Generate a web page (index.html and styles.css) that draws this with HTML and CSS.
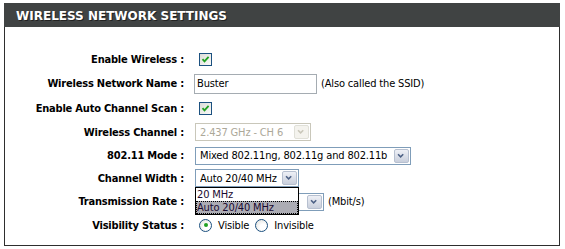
FILE: index.html
```html
<!DOCTYPE html>
<html>
<head>
<meta charset="utf-8">
<link rel="stylesheet" href="styles.css">
</head>
<body>
<div class="panel">
  <div class="panel-head">WIRELESS NETWORK SETTINGS</div>
  <div class="form">
    <div class="label">Enable Wireless :</div>
    <div class="field"><span class="check"><svg viewBox="0 0 13 13" width="13" height="13"><path d="M3.5 6.2 L5.5 8.4 L9.6 3.9" fill="none" stroke="#21a121" stroke-width="1.8"/></svg></span></div>

    <div class="label">Wireless Network Name :</div>
    <div class="field"><span class="text-input">Buster</span><span class="note">(Also called the SSID)</span></div>

    <div class="label">Enable Auto Channel Scan :</div>
    <div class="field"><span class="check"><svg viewBox="0 0 13 13" width="13" height="13"><path d="M3.5 6.2 L5.5 8.4 L9.6 3.9" fill="none" stroke="#21a121" stroke-width="1.8"/></svg></span></div>

    <div class="label">Wireless Channel :</div>
    <div class="field"><span class="select disabled w-channel"><span class="sel-text">2.437 GHz - CH 6</span><span class="arrow"><svg viewBox="0 0 15 14" width="13" height="14"><path d="M3.5 5 L6.5 8 L9.5 5" fill="none" stroke="#c9c7ba" stroke-width="1.8"/></svg></span></span></div>

    <div class="label">802.11 Mode :</div>
    <div class="field"><span class="select w-mode"><span class="sel-text">Mixed 802.11ng, 802.11g and 802.11b</span><span class="arrow"><svg viewBox="0 0 15 14" width="13" height="14"><path d="M3.5 5 L6.5 8 L9.5 5" fill="none" stroke="#4d6185" stroke-width="1.8"/></svg></span></span></div>

    <div class="label">Channel Width :</div>
    <div class="field"><span class="select w-width"><span class="sel-text">Auto 20/40 MHz</span><span class="arrow"><svg viewBox="0 0 15 14" width="13" height="14"><path d="M3.5 5 L6.5 8 L9.5 5" fill="none" stroke="#4d6185" stroke-width="1.8"/></svg></span>
      <span class="dropdown"><span class="opt">20 MHz</span><span class="opt active">Auto 20/40 MHz</span></span>
    </span></div>

    <div class="label">Transmission Rate :</div>
    <div class="field"><span class="select w-rate"><span class="sel-text"></span><span class="arrow"><svg viewBox="0 0 15 14" width="13" height="14"><path d="M3.5 5 L6.5 8 L9.5 5" fill="none" stroke="#4d6185" stroke-width="1.8"/></svg></span></span><span class="note">(Mbit/s)</span></div>

    <div class="label">Visibility Status :</div>
    <div class="field"><span class="radio on"></span><span class="radio-label">Visible</span><span class="radio"></span><span class="radio-label">Invisible</span></div>
  </div>
</div>
</body>
</html>
```

FILE: styles.css
```css
html, body {
  margin: 0;
  padding: 0;
  background: #fff;
}
body {
  padding: 3px 0 0 4px;
}
.panel {
  width: 556px;
  height: 243px;
  box-sizing: border-box;
  border: 1px solid #2e2e2e;
  border-top: none;
  background: #fff;
}
.panel-head {
  margin: 0 -1px;
  height: 24px;
  box-sizing: border-box;
  padding: 2px 0 0 12px;
  line-height: 22px;
  background: #404343;
  color: #fff;
  font-family: "DejaVu Sans", sans-serif;
  font-weight: bold;
  font-size: 12px;
  letter-spacing: 0;
  text-shadow: 1px 1px 0 #222;
}
.form {
  display: grid;
  grid-template-columns: 179px 1fr;
  grid-template-rows: 24px 25px 24px 24px 23px 22px 25px 22px;
  column-gap: 11px;
  padding-top: 20px;
  font-family: "DejaVu Sans Condensed", "DejaVu Sans", sans-serif;
  font-size: 11px;
  color: #000;
}
.label {
  font-weight: bold;
  letter-spacing: -0.2px;
  text-align: right;
  display: flex;
  align-items: center;
  justify-content: flex-end;
  white-space: nowrap;
}
.field {
  display: flex;
  align-items: center;
  white-space: nowrap;
  letter-spacing: -0.15px;
}
.check {
  width: 13px;
  height: 13px;
  box-sizing: border-box;
  margin-left: 4px;
  border: 1px solid #1c5180;
  background: linear-gradient(135deg, #dcdcd7, #fbfbf9);
  display: flex;
  align-items: center;
  justify-content: center;
  overflow: hidden;
}
.check svg {
  display: block;
  margin: -1px;
}
.text-input {
  width: 123px;
  height: 20px;
  box-sizing: border-box;
  border: 1px solid #a5acb2;
  padding: 0 2px;
  line-height: 18px;
  margin-left: -1px;
}
.note {
  margin-left: 4px;
}
.select {
  position: relative;
  display: flex;
  align-items: center;
  height: 18px;
  box-sizing: border-box;
  border: 1px solid #7f9db9;
  background: #fff;
  padding-left: 4px;
}
.sel-text {
  flex: 1;
  overflow: hidden;
}
.arrow {
  width: 15px;
  height: 14px;
  box-sizing: border-box;
  margin: 0 1px 0 2px;
  border: 1px solid #b7c0d0;
  border-radius: 2px;
  background: linear-gradient(#eef0f6, #c9cfdc);
  display: flex;
  align-items: center;
  justify-content: center;
}
.arrow svg { display: block; }
.select.disabled {
  border-color: #c9c7ba;
  color: #aca899;
}
.select.disabled .arrow {
  border-color: #e0e0d8;
  background: #f4f3ee;
}
.w-channel { width: 116px; }
.w-mode { width: 216px; }
.w-width { width: 104px; }
.w-rate { width: 129px; }
.dropdown {
  position: absolute;
  left: -1px;
  top: 17px;
  width: 104px;
  height: 28px;
  box-sizing: border-box;
  border: 1px solid #000;
  background: #fff;
  z-index: 5;
  display: flex;
  flex-direction: column;
}
.opt {
  height: 13px;
  line-height: 13px;
  padding-left: 1px;
  color: #1a0a30;
}
.opt.active {
  height: 13px;
  background: #acacb4;
  outline: 1px dotted #000;
  outline-offset: -1px;
  color: #1a0a30;
}
.radio {
  width: 13px;
  height: 13px;
  box-sizing: border-box;
  border-radius: 50%;
  border: 1px solid #1c5180;
  background: radial-gradient(circle at 65% 65%, #fff 30%, #dcdcd7 100%);
  margin-left: 4px;
  position: relative;
}
.radio.on::after {
  content: "";
  position: absolute;
  left: 3.5px;
  top: 3.5px;
  width: 4px;
  height: 4px;
  border-radius: 50%;
  background: #21a121;
}
.radio-label {
  margin-left: 6px;
  margin-right: 2px;
}
```
